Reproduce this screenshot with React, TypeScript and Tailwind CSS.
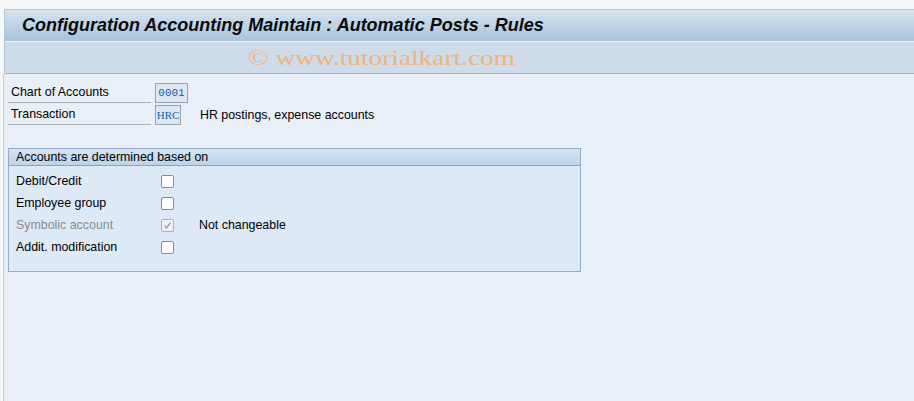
import React from "react";

const font = { fontFamily: '"Liberation Sans", Arial, sans-serif' };

function Check({ checked, disabled }: { checked?: boolean; disabled?: boolean }) {
  return (
    <div
      className={`w-[13px] h-[13px] rounded-[2px] border flex items-center justify-center ${
        disabled ? "border-[#a8b0b8] bg-[#eef2f6]" : "border-[#848c94] bg-white"
      }`}
    >
      {checked && (
        <svg width="9" height="9" viewBox="0 0 9 9">
          <path d="M1.5 4.5 L3.5 7 L7.5 1.5" fill="none" stroke="#8a9098" strokeWidth="1.2" />
        </svg>
      )}
    </div>
  );
}

export default function App() {
  const rows = [
    { label: "Debit/Credit", checked: false },
    { label: "Employee group", checked: false },
    { label: "Symbolic account", checked: true, disabled: true, note: "Not changeable" },
    { label: "Addit. modification", checked: false },
  ];
  return (
    <div className="w-[914px] h-[401px] bg-[#f6f8fa] flex flex-col overflow-hidden text-black" style={font}>
      <div className="h-[9px] bg-[#f7f8fa]" />
      <div className="ml-[4px] border-l border-[#b8c4d0] flex flex-col">
        <div className="h-[32px] border-t border-[#b4c4d4] bg-gradient-to-b from-[#d6e4f0] to-[#a9c2da] flex items-center pl-[17px]">
          <span className="text-[18px] font-bold italic text-[#0a0a0a]">
            Configuration Accounting Maintain : Automatic Posts - Rules
          </span>
        </div>
        <div className="h-[1px] bg-[#eef3f8]" />
        <div className="h-[32px] bg-[#cddce8] border-b border-[#a4b4c4] flex items-center">
          <span
            className="ml-[243px] text-[21px] text-[#f2b27c] mt-[2px] inline-block scale-x-[1.3] origin-left"
            style={{ fontFamily: '"Liberation Serif", "Times New Roman", serif' }}
          >
            © www.tutorialkart.com
          </span>
        </div>
      </div>
      <div className="flex-1 ml-[3px] border-l border-[#c4ccd6] bg-[#e8eff7] pl-[4px] pt-[9px]">
        <div className="flex flex-col gap-[2px] text-[12.4px]">
          <div className="flex items-center h-[20px]">
            <div className="w-[143px] h-[20px] border-b border-[#a8b2bc] pl-[3px] flex items-center">Chart of Accounts</div>
            <div className="ml-[4px] w-[33px] h-[20px] border border-[#9aa4ae] bg-[#dde8f2] flex items-center justify-center text-[11px] text-[#1060b0]" style={{ fontFamily: '"Liberation Mono", monospace' }}>
              0001
            </div>
          </div>
          <div className="flex items-center h-[20px]">
            <div className="w-[143px] h-[20px] border-b border-[#a8b2bc] pl-[3px] flex items-center">Transaction</div>
            <div className="ml-[4px] w-[26px] h-[20px] border border-[#9aa4ae] bg-[#dde8f2] flex items-center justify-center text-[11px] text-[#1060b0]" style={{ fontFamily: '"Liberation Serif", serif' }}>
              HRC
            </div>
            <span className="ml-[19px]">HR postings, expense accounts</span>
          </div>
        </div>
        <div className="mt-[23px] w-[573px] h-[124px] border border-[#93adc8] bg-[#dde9f4] flex flex-col text-[12.4px]">
          <div className="h-[17px] bg-gradient-to-b from-[#d6e5f2] to-[#bcd3e8] border-b border-[#8aa4c0] flex items-center pl-[7px]">
            Accounts are determined based on
          </div>
          <div className="flex flex-col pt-[4px] pl-[7px]">
            {rows.map((r) => (
              <div key={r.label} className="flex items-center h-[22px]">
                <div className={`w-[145px] ${r.disabled ? "text-[#8c8c8c]" : ""}`}>{r.label}</div>
                <Check checked={r.checked} disabled={r.disabled} />
                {r.note && <span className="ml-[25px]">{r.note}</span>}
              </div>
            ))}
          </div>
        </div>
      </div>
    </div>
  );
}
